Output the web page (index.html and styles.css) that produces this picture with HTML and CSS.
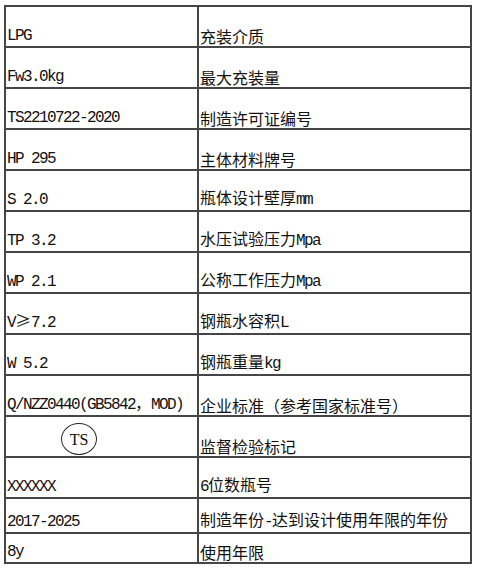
FILE: index.html
```html
<!DOCTYPE html>
<html lang="zh">
<head>
<meta charset="utf-8">
<title>钢瓶标记说明</title>
<link rel="stylesheet" href="styles.css">
</head>
<body>
<table class="spec">
  <colgroup><col class="c-code"><col class="c-desc"></colgroup>
  <tbody>
    <tr><td class="code">LPG</td><td class="desc">充装介质</td></tr>
    <tr><td class="code">Fw3.0kg</td><td class="desc">最大充装量</td></tr>
    <tr><td class="code">TS2210722-2020</td><td class="desc">制造许可证编号</td></tr>
    <tr><td class="code">HP 295</td><td class="desc">主体材料牌号</td></tr>
    <tr><td class="code">S 2.0</td><td class="desc">瓶体设计壁厚<span class="half">mm</span></td></tr>
    <tr><td class="code">TP 3.2</td><td class="desc">水压试验压力<span class="half">Mpa</span></td></tr>
    <tr><td class="code">WP 2.1</td><td class="desc">公称工作压力<span class="half">Mpa</span></td></tr>
    <tr><td class="code">V<span class="wide">≥</span>7.2</td><td class="desc">钢瓶水容积<span class="half">L</span></td></tr>
    <tr><td class="code">W 5.2</td><td class="desc">钢瓶重量<span class="half">kg</span></td></tr>
    <tr><td class="code">Q/NZZ0440(GB5842<span class="wide">，</span>MOD)</td><td class="desc">企业标准（参考国家标准号）</td></tr>
    <tr><td class="code mark-cell"><span class="ts-mark">TS</span></td><td class="desc">监督检验标记</td></tr>
    <tr><td class="code">XXXXXX</td><td class="desc"><span class="half">6</span>位数瓶号</td></tr>
    <tr class="r-35"><td class="code">2017-2025</td><td class="desc">制造年份<span class="half">-</span>达到设计使用年限的年份</td></tr>
    <tr class="r-30"><td class="code">8y</td><td class="desc">使用年限</td></tr>
  </tbody>
</table>
</body>
</html>
```
FILE: styles.css
```css
html, body {
  margin: 0;
  padding: 0;
  background: #ffffff;
}

body {
  padding: 5px 0 0 4px;
  color: #111111;
}

.spec {
  border-collapse: collapse;
  width: 466px;
  table-layout: fixed;
}

.c-code { width: 193px; }
.c-desc { width: 273px; }

.spec tr { height: 41px; }
.spec tr.r-35 { height: 35px; }
.spec tr.r-30 { height: 30px; }

.spec td {
  border: 2px solid #454545;
  padding: 0 0 1px 1px;
  vertical-align: bottom;
  white-space: nowrap;
  line-height: 17px;
}

.code {
  font-family: "Liberation Mono", "Noto Sans CJK SC", monospace;
  font-size: 16px;
  letter-spacing: -1.6px;
}

.desc {
  font-family: "Noto Sans CJK SC", "Noto Sans", sans-serif;
  font-size: 16px;
}

.half {
  font-family: "Liberation Mono", monospace;
  font-size: 16px;
  letter-spacing: -1.6px;
}

.wide {
  font-family: "Noto Sans CJK SC", sans-serif;
  font-size: 16px;
  letter-spacing: 0;
}

.mark-cell {
  vertical-align: middle;
  padding: 0;
}

.ts-mark {
  display: flex;
  align-items: center;
  justify-content: center;
  width: 34px;
  height: 30px;
  margin: 3px 0 0 54px;
  border: 1.5px solid #222;
  border-radius: 50%;
  font-family: "Liberation Serif", serif;
  font-size: 16px;
  letter-spacing: 0;
}
```
